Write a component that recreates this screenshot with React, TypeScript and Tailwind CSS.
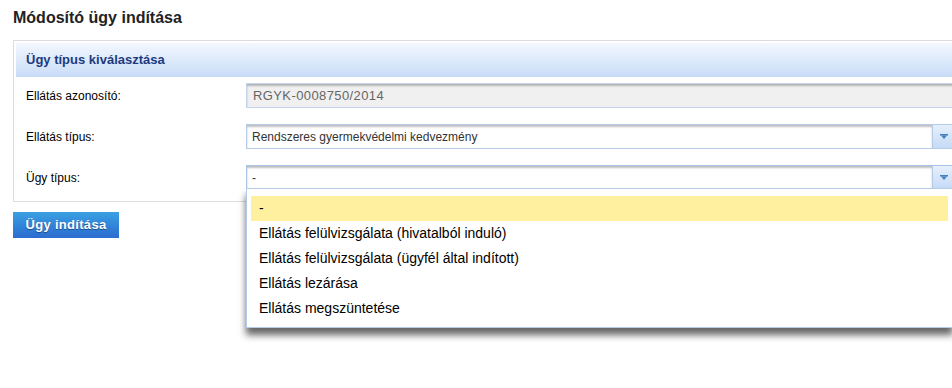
import React from 'react';

const options = [
  '-',
  'Ellátás felülvizsgálata (hivatalból induló)',
  'Ellátás felülvizsgálata (ügyfél által indított)',
  'Ellátás lezárása',
  'Ellátás megszüntetése',
];

function Arrow() {
  return (
    <div className="w-[22px] shrink-0 border-l border-[#b5cbe8] bg-gradient-to-b from-[#e6f0fc] to-[#c5daf6] flex items-center pl-[7px]">
      <svg width="8" height="6" viewBox="0 0 8 6">
        <rect x="0" y="0" width="8" height="1.5" fill="#3d7fc1" />
        <polygon points="1,1.5 7,1.5 4,5" fill="#3d7fc1" />
      </svg>
    </div>
  );
}

function Row({ label, children }: { label: string; children: React.ReactNode }) {
  return (
    <div className="flex items-center h-[25px]">
      <div className="w-[220px] shrink-0 text-[12px] text-black">{label}</div>
      {children}
    </div>
  );
}

export default function App() {
  return (
    <div className="w-[952px] h-[388px] overflow-hidden bg-white relative" style={{ fontFamily: '"Liberation Sans", Arial, sans-serif' }}>
      <div className="w-[1000px] pl-[13px] pt-[8px]">
        <h1 className="text-[16px] font-bold text-[#222] leading-[20px]">Módosító ügy indítása</h1>

        <div className="mt-[12px] border border-[#dcdcdc] p-[2px] pb-[11px]">
          <div className="h-[34px] bg-gradient-to-b from-[#f3f7fe] to-[#c8dcf7] flex items-center pl-[10px]">
            <span className="text-[13px] font-bold text-[#1d3a80]">Ügy típus kiválasztása</span>
          </div>

          <div className="pl-[10px] pt-[6px] flex flex-col gap-[16px]">
            <Row label="Ellátás azonosító:">
              <div className="w-[709px] h-[25px] border border-[#c3d4ec] bg-[#f0f0f0] shadow-[inset_0_2px_2px_rgba(0,0,0,0.25)] flex items-center pl-[6px] text-[13px] tracking-[0.4px] text-[#666]">
                RGYK-0008750/2014
              </div>
            </Row>
            <Row label="Ellátás típus:">
              <div className="w-[709px] h-[25px] border border-[#b5cbe8] bg-white flex">
                <div className="flex-1 shadow-[inset_0_2px_2px_rgba(0,0,0,0.25)] flex items-center pl-[5px] text-[12px] text-[#333]">
                  Rendszeres gyermekvédelmi kedvezmény
                </div>
                <Arrow />
              </div>
            </Row>
            <Row label="Ügy típus:">
              <div className="w-[709px] h-[25px] border border-[#a9c3e6] bg-white flex">
                <div className="flex-1 shadow-[inset_0_2px_2px_rgba(0,0,0,0.25)] flex items-center pl-[5px] text-[12px] text-[#333]">
                  -
                </div>
                <Arrow />
              </div>
            </Row>
          </div>
        </div>

        <button className="mt-[10px] w-[106px] h-[26px] bg-gradient-to-b from-[#3aa0e2] to-[#2c6bd0] text-white text-[13px] font-bold tracking-[0.3px] [text-shadow:0_1px_1px_rgba(0,0,0,0.4)] flex items-center justify-center">
          Ügy indítása
        </button>
      </div>

      <div className="absolute left-[246px] top-[188px] w-[707px] border border-[#b5cbe8] bg-white pt-[7px] pb-[6px] px-[4px] shadow-[0_7px_7px_rgba(0,0,0,0.6)]">
        {options.map((o, i) => (
          <div
            key={o}
            className={`h-[25px] flex items-center pl-[8px] text-[14px] text-black ${i === 0 ? 'bg-[#fff0a0]' : ''}`}
          >
            {o}
          </div>
        ))}
      </div>
    </div>
  );
}
